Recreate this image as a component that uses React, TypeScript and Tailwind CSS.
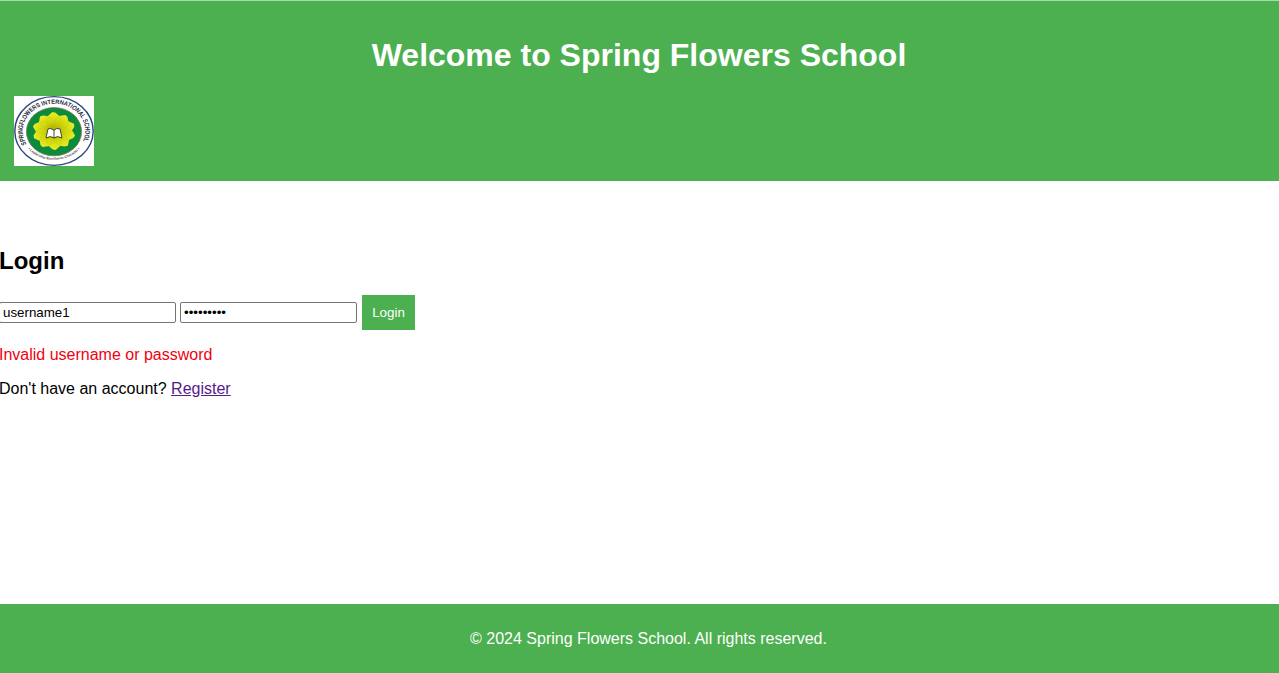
import React from "react";

const outerPetals = Array.from({ length: 10 }, (_, i) => i * 36);
const innerPetals = Array.from({ length: 10 }, (_, i) => i * 36 + 18);

function SchoolLogo() {
  return (
    <svg
      className="block h-[70px] w-20 bg-white"
      viewBox="0 0 100 100"
      preserveAspectRatio="none"
      role="img"
      aria-label="Spring Flowers International School"
    >
      <defs>
        <path id="name-arc" d="M 16.2 69.5 A 39 39 0 1 1 83.8 69.5" />
        <path id="motto-arc" d="M 16.4 74 A 41.5 41.5 0 0 0 83.6 74" />
        <radialGradient id="petal" gradientUnits="userSpaceOnUse" cx="50" cy="50" r="28">
          <stop offset="0" stopColor="#a8a000" />
          <stop offset="0.5" stopColor="#cfd60c" />
          <stop offset="1" stopColor="#eeee28" />
        </radialGradient>
      </defs>
      <circle cx="50" cy="50" r="49" fill="#fff" stroke="#2d477d" strokeWidth="1.8" />
      <circle cx="50" cy="51" r="34.5" fill="#0d8b3d" stroke="#80764a" strokeWidth="1" />
      {outerPetals.map((angle) => (
        <path
          key={angle}
          d="M50 50 C40 42 40 32 43 28 L48 23 L52 24 L57 29 C61 33 60 42 50 50Z"
          fill="url(#petal)"
          transform={`rotate(${angle} 50 50)`}
        />
      ))}
      {innerPetals.map((angle) => (
        <path
          key={angle}
          d="M50 50 C44 42 44 34 50 29 C56 34 56 42 50 50Z"
          fill="url(#petal)"
          stroke="#b9c60f"
          strokeWidth="0.4"
          transform={`rotate(${angle} 50 50)`}
        />
      ))}
      <path d="M42.5 47 L40 60 Q46 56 50 60 Q54 56 60 60 L57.5 47 Q53 45 50 49 Q46 45 42.5 47Z" fill="#fff" stroke="#30391f" strokeWidth="1.2" />
      <path d="M50 49V60" stroke="#30391f" strokeWidth="1.2" />
      <g fontFamily="Liberation Sans, Arial, sans-serif">
        <text fontSize="8.6" fontWeight="bold" fill="#22263b">
          <textPath href="#name-arc" textLength="156" startOffset="1" lengthAdjust="spacingAndGlyphs">
            SPRINGFLOWERS INTERNATIONAL SCHOOL
          </textPath>
        </text>
        <text fontSize="4.8" fontWeight="bold" fill="#4b4b50">
          <textPath href="#motto-arc" textLength="74" startOffset="2" lengthAdjust="spacingAndGlyphs">
            • Leadership-Excellence-Character •
          </textPath>
        </text>
      </g>
    </svg>
  );
}

export default function App() {
  return (
    <div className="flex h-[673px] flex-col overflow-hidden bg-white font-['Liberation_Sans',Arial,sans-serif] text-base leading-[18px] text-black">
      <header className="h-[181px] shrink-0 border-t border-[#a6dda9] bg-[#4caf50] pt-9 pl-3.5">
        <h1 className="mb-[22px] -ml-[15px] text-center text-[32px] leading-[37px] font-bold text-white">
          Welcome to Spring Flowers School
        </h1>
        <SchoolLogo />
      </header>
      <main className="-ml-px flex-1 pt-[66px]">
        <h2 className="mb-5 text-2xl leading-7 font-bold">Login</h2>
        <form className="flex h-[35px] items-center" onSubmit={(e) => e.preventDefault()}>
          <input
            aria-label="Username"
            defaultValue="username1"
            className="mr-1 h-[21px] w-[177px] rounded-[2px] border border-[#767676] bg-white px-[3px] text-[13.333px] leading-normal"
          />
          <input
            type="password"
            aria-label="Password"
            defaultValue="password1"
            className="mr-[5px] h-[21px] w-[177px] rounded-[2px] border border-[#767676] bg-white px-[3px] text-[13.333px] leading-normal"
          />
          <button className="h-[35px] w-[53px] bg-[#4caf50] text-[13.333px] leading-[15px] text-white">Login</button>
        </form>
        <p className="mt-4 text-[#f00010]">Invalid username or password</p>
        <p className="mt-4">
          Don't have an account?{" "}
          <a href="#register" className="text-[#551a8b] underline">Register</a>
        </p>
      </main>
      <footer className="h-[69px] shrink-0 bg-[#4caf50] pt-[26px] pl-[18px] text-center text-white">
        <p>© 2024 Spring Flowers School. All rights reserved.</p>
      </footer>
    </div>
  );
}
